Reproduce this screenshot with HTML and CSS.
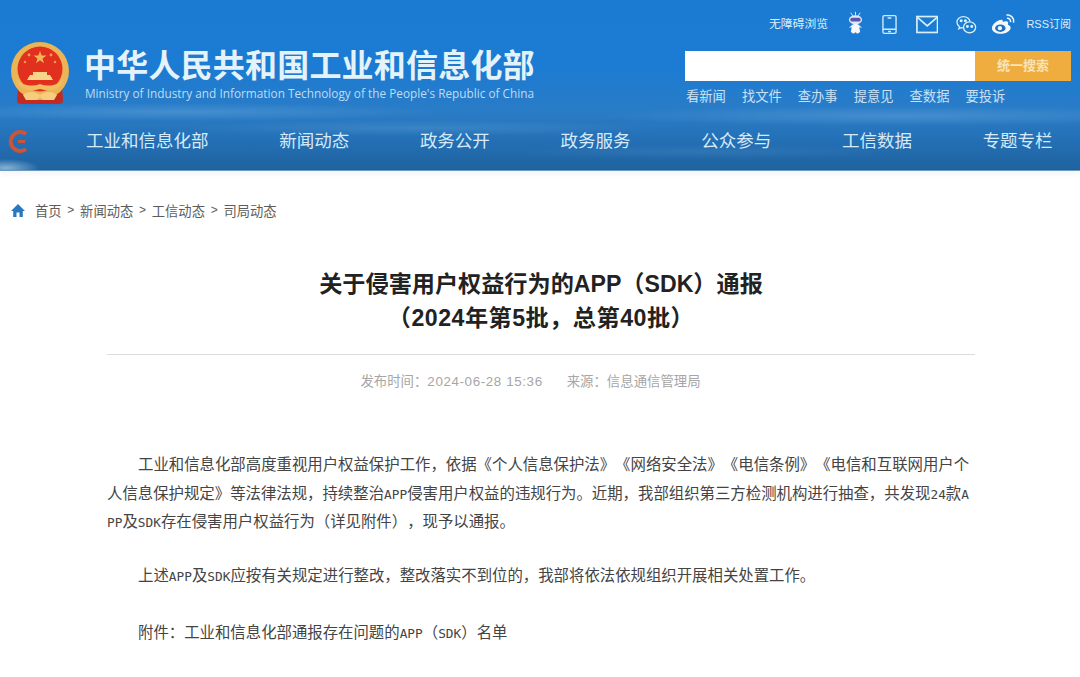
FILE: index.html
```html
<!DOCTYPE html>
<html>
<head>
  <meta charset="utf-8">
  <title>关于侵害用户权益行为的APP（SDK）通报</title>
  <link rel="stylesheet" href="styles.css">
</head>
<body>
  <div class="header">
    <div class="head-top">
      <div class="brand">
        <svg class="emblem" viewBox="0 0 60 62" width="60" height="62">
          <path d="M8 44h44l1 14c0 3-2 4-4 4H11c-2 0-4-1-4-4z" fill="#c42a20"/>
          <circle cx="30" cy="29" r="29" fill="#ebb556"/>
          <circle cx="30" cy="27" r="22.500" fill="#e2301f"/>
          <path d="M30 9l1.600 4.600h4.900l-4 2.900 1.500 4.700-4-2.900-4 2.900 1.500-4.700-4-2.900h4.900z" fill="#f2b65a"/>
          <circle cx="19" cy="13" r="1.400" fill="#f2a04e"/>
          <circle cx="41" cy="13" r="1.400" fill="#f2a04e"/>
          <circle cx="15" cy="20" r="1.200" fill="#f2a04e"/>
          <circle cx="45" cy="20" r="1.200" fill="#f2a04e"/>
          <path d="M23 30h14v3h3l3 5H17l3-5h3z" fill="#f6d48a"/>
          <path d="M6 36c6 8 15 9 24 6 9 3 18 2 24-6-1 10-12 15-24 11C18 51 7 46 6 36z" fill="#f0bd5f"/>
          <path d="M13 53c5-4 11-4 17 0 6-4 12-4 17 0l-3 5H33l-3-3-3 3H16z" fill="#f4cd7e"/>
        </svg>
        <div class="brand-text">
          <div class="brand-cn">中华人民共和国工业和信息化部</div>
          <div class="brand-en">Ministry of Industry and Information Technology of the People's Republic of China</div>
        </div>
      </div>
      <div class="tools">
        <div class="tool-row">
          <span class="tool-text access">无障碍浏览</span>
          <svg class="robot" viewBox="0 0 16 24" width="16" height="24">
            <path d="M3 1l2.500 4M13 1l-2.500 4M8 0v4" stroke="#d9e6f6" stroke-width="1"/>
            <ellipse cx="8" cy="8.500" rx="7" ry="4.800" fill="#dfe8f5"/>
            <rect x="2.500" y="6.500" width="11" height="4" rx="1.800" fill="#5a55a8"/>
            <path d="M5 13.500c2-.7 4-.7 6 0l4 3.500-3-.5 1 5-3 2-2-1.500-2 1.500-3-2 1-5-3 .5z" fill="#f4f7fb"/>
          </svg>
          <svg class="phone" viewBox="0 0 16 21" width="16" height="21" fill="none" stroke="#cfeaf7" stroke-width="1.500">
            <rect x="1" y="1" width="14" height="19" rx="1.500"/>
            <path d="M1 15.500h14M6 3.500h4M6.500 18h3"/>
          </svg>
          <svg class="mail" viewBox="0 0 24 19" width="24" height="19" fill="none" stroke="#d8f0f9" stroke-width="1.800">
            <rect x="1" y="1" width="22" height="17"/>
            <path d="M1.500 2l10.500 9 10.500-9"/>
          </svg>
          <svg class="wechat" viewBox="0 0 22 20" width="22" height="20" fill="none" stroke="#d8f0f9" stroke-width="1.400">
            <path d="M15 6.500C14.500 3.500 11.500 1 8 1 4 1 1 3.700 1 7c0 2 1 3.600 2.800 4.800L3 14l2.700-1.200c.8.200 1.500.300 2.300.300"/>
            <ellipse cx="14.500" cy="12.500" rx="6.500" ry="5.800"/>
            <circle cx="5.500" cy="5.500" r=".9" fill="#d8f0f9"/>
            <circle cx="10" cy="5.500" r=".9" fill="#d8f0f9"/>
            <circle cx="12.200" cy="11.500" r=".9" fill="#d8f0f9"/>
            <circle cx="16.800" cy="11.500" r=".9" fill="#d8f0f9"/>
          </svg>
          <svg class="weibo" viewBox="0 0 26 22" width="26" height="22">
            <path d="M10 6.500C5 8 1 12 1 15.500 1 19 5.500 21.500 10.500 21.500c6 0 10.500-3.500 10.500-6.500 0-2-2-3-3-3.300.8-2 .2-3.200-1.200-3.600-1.300-.3-3.300.2-4.300.7.400-1.700-.4-3.100-2.500-1.800z" fill="#f2f7fb"/>
            <ellipse cx="10" cy="15.500" rx="5.500" ry="4" fill="#1c6fc0"/>
            <circle cx="9.500" cy="15.500" r="2.300" fill="#f2f7fb"/>
            <path d="M16.500 1.500c4.500-.8 8.500 3 7.500 8M17 5c2.500-.4 4.300 1.400 3.800 4" fill="none" stroke="#f2f7fb" stroke-width="1.600"/>
          </svg>
          <span class="tool-text rss">RSS订阅</span>
        </div>
        <div class="search">
          <div class="search-input"></div>
          <div class="search-btn">统一搜索</div>
        </div>
        <div class="quick-links">
          <span>看新闻</span>
          <span>找文件</span>
          <span>查办事</span>
          <span>提意见</span>
          <span>查数据</span>
          <span>要投诉</span>
        </div>
      </div>
    </div>
    <div class="nav">
      <svg class="nav-logo" viewBox="0 0 24 26" width="24" height="26" fill="none">
        <path d="M18 6A9.500 9.500 0 1 0 18 21" stroke="#c9553a" stroke-width="4"/>
        <path d="M10 13.500h7" stroke="#c9553a" stroke-width="3"/>
      </svg>
      <a>工业和信息化部</a>
      <a>新闻动态</a>
      <a>政务公开</a>
      <a>政务服务</a>
      <a>公众参与</a>
      <a>工信数据</a>
      <a>专题专栏</a>
    </div>
  </div>

  <div class="breadcrumb">
    <svg class="home" viewBox="0 0 14 13" width="14" height="13">
      <path d="M7 0L0 7h2.200v6h3.300V8.500h3V13h3.300V7H14z" fill="#2a78bd"/>
    </svg>
    <span>首页</span><i>&gt;</i><span>新闻动态</span><i>&gt;</i><span>工信动态</span><i>&gt;</i><span>司局动态</span>
  </div>

  <div class="article">
    <h1>关于侵害用户权益行为的APP（SDK）通报<br><span class="batch">（2024年第5批，总第40批）</span></h1>
    <div class="meta">
      <span>发布时间：<span class="date">2024-06-28 15:36</span></span>
      <span>来源：信息通信管理局</span>
    </div>
    <div class="content">
      <p>工业和信息化部高度重视用户权益保护工作，依据《个人信息保护法》《网络安全法》《电信条例》《电信和互联网用户个<br>人信息保护规定》等法律法规，持续整治<span class="mono">APP</span>侵害用户权益的违规行为。近期，我部组织第三方检测机构进行抽查，共发现<span class="mono">24</span>款<span class="mono">A</span><br><span class="mono">PP</span>及<span class="mono">SDK</span>存在侵害用户权益行为（详见附件），现予以通报。</p>
      <p>上述<span class="mono">APP</span>及<span class="mono">SDK</span>应按有关规定进行整改，整改落实不到位的，我部将依法依规组织开展相关处置工作。</p>
      <p>附件：工业和信息化部通报存在问题的<span class="mono">APP</span>（<span class="mono">SDK</span>）名单</p>
    </div>
  </div>
</body>
</html>
```

FILE: styles.css
```css
html, body {
  height: 677px;
  overflow: hidden;
}

body {
  margin: 0;
  background: #fff;
  color: #333;
  font-family: "Liberation Sans", "Noto Sans CJK SC", sans-serif;
  text-spacing-trim: space-all;
}

.header {
  height: 171px;
  box-sizing: border-box;
  background:
    radial-gradient(ellipse 34px 9px at 6px 168px, rgba(200, 230, 245, 0.6), transparent),
    radial-gradient(ellipse 260px 9px at 180px 112px, rgba(130, 185, 230, 0.3), transparent),
    radial-gradient(ellipse 240px 8px at 420px 128px, rgba(130, 185, 230, 0.22), transparent),
    radial-gradient(ellipse 300px 10px at 900px 116px, rgba(130, 185, 230, 0.3), transparent),
    radial-gradient(ellipse 200px 7px at 700px 152px, rgba(100, 160, 215, 0.2), transparent),
    linear-gradient(180deg, #1b7bd4 0%, #1c7bd2 40%, #2a7cc6 66%, #2470b6 82%, #1f629f 100%);
  border-bottom: 1px solid #6b9cc0;
  box-shadow: 0 3px 6px rgba(120, 150, 170, 0.1);
}

.head-top {
  height: 113px;
  display: flex;
  justify-content: space-between;
}

.brand {
  display: flex;
  align-items: flex-start;
  padding: 42px 0 0 10px;
}

.emblem {
  flex: none;
}

.brand-text {
  margin-left: 15px;
  padding-top: 5px;
}

.brand-cn {
  color: #e4f3fa;
  font-size: 32px;
  font-weight: 700;
  line-height: 38px;
  letter-spacing: 0.2px;
  margin-left: -1px;
  white-space: nowrap;
}

.brand-en {
  color: #bcdcf2;
  font-family: "Open Sans", sans-serif;
  font-size: 11.820px;
  line-height: 16px;
  white-space: nowrap;
}

.tools {
  width: 386px;
  margin-right: 9px;
}

.tool-row {
  height: 51px;
  display: flex;
  align-items: flex-start;
  color: #dcedf9;
}

.tool-text {
  font-size: 11.800px;
  line-height: 16px;
  margin-top: 16px;
}

.access {
  margin-left: 84px;
  width: 60px;
  white-space: nowrap;
}

.robot {
  margin: 11px 0 0 20px;
}

.phone {
  margin: 14px 0 0 19px;
}

.mail {
  margin: 15px 0 0 19px;
}

.wechat {
  margin: 15px 0 0 18px;
}

.weibo {
  margin: 13px 0 0 14px;
}

.rss {
  margin-left: 11px;
  font-size: 11px;
  white-space: nowrap;
}

.search {
  display: flex;
  height: 30px;
}

.search-input {
  flex: 1;
  background: #fff;
}

.search-btn {
  width: 96px;
  background: #efad3f;
  color: #f8e4b8;
  font-size: 13px;
  font-weight: 700;
  line-height: 30px;
  text-align: center;
}

.quick-links {
  display: flex;
  gap: 16px;
  margin: 7px 0 0 1px;
  color: #cbe1f3;
  font-size: 13.300px;
  line-height: 18px;
  white-space: nowrap;
}

.nav {
  position: relative;
  display: flex;
  gap: 70.700px;
  padding: 17px 0 0 86px;
  color: #d6eaf8;
  font-size: 17.500px;
  line-height: 22px;
  white-space: nowrap;
}

.nav-logo {
  position: absolute;
  left: 8px;
  top: 15px;
}

.breadcrumb {
  display: flex;
  align-items: center;
  height: 20px;
  margin-top: 29px;
  padding-left: 11px;
  color: #5c5c5c;
  font-size: 13.300px;
}

.home {
  margin-right: 10px;
}

.breadcrumb i {
  font-style: normal;
  width: 18.500px;
  text-align: center;
  font-size: 12px;
}

.article {
  width: 868px;
  margin: 0 0 0 107px;
}

h1 {
  margin: 0;
  padding: 47px 0 19px;
  border-bottom: 1px solid #dcdcdc;
  color: #222;
  font-size: 23.150px;
  font-weight: 700;
  line-height: 34px;
  text-align: center;
}

.batch {
  letter-spacing: 0.5px;
}

.meta {
  display: flex;
  justify-content: center;
  gap: 24px;
  margin-top: 18px;
  padding-right: 21px;
  color: #a6a6a6;
  font-size: 13.400px;
  line-height: 18px;
}

.date {
  letter-spacing: 0.6px;
}

.content {
  margin-top: 60px;
  width: 866px;
  color: #444;
  font-size: 15.400px;
  line-height: 28.500px;
}

.content p {
  margin: 0 0 28.500px;
  text-indent: 31px;
}

.content p:first-child {
  margin-bottom: 25.500px;
}

.mono {
  font-family: "DejaVu Sans Mono", monospace;
  font-size: 12.790px;
  line-height: 1;
}
```
